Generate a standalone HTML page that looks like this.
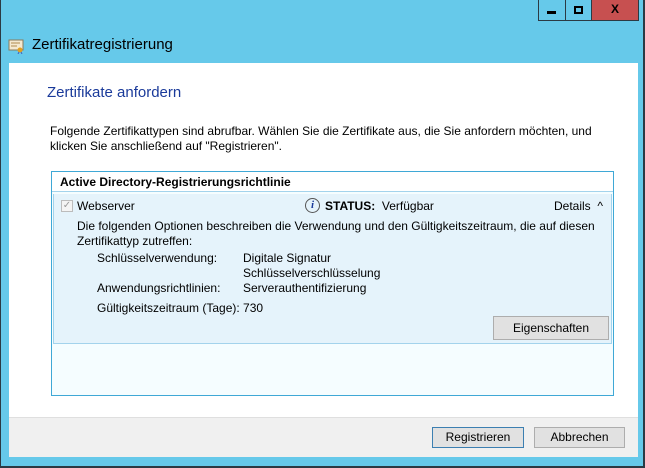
<!DOCTYPE html>
<html><head><meta charset="utf-8"><style>
*{margin:0;padding:0;box-sizing:border-box}
body{width:645px;height:468px;background:#66c9ea;position:relative;overflow:hidden;font-family:"Liberation Sans",sans-serif;font-size:12px;color:#000}
.a{position:absolute}
.btn{position:absolute;background:#e1e1e1;border:1px solid #adadad;text-align:center;font-size:12px;line-height:20px}
</style></head><body>
<div class="a" style="left:0;top:0;width:1px;height:468px;background:#2b3a44"></div>
<div class="a" style="left:0;top:466px;width:645px;height:2px;background:#2b3a44"></div>
<div class="a" style="left:643px;top:0;width:2px;height:468px;background:#2b3a44"></div>
<div class="a" style="left:538px;top:0;width:28px;height:21px;border:1px solid #2b3a44;border-top:0"></div>
<div class="a" style="left:547px;top:11px;width:9px;height:3px;background:#000"></div>
<div class="a" style="left:566px;top:0;width:26px;height:21px;border:1px solid #2b3a44;border-top:0;border-left:0"></div>
<div class="a" style="left:574px;top:6px;width:9px;height:8px;border:2px solid #000"></div>
<div class="a" style="left:592px;top:0;width:47px;height:21px;background:#c75050;border:1px solid #2b3a44;border-top:0;border-left:0;text-align:center;font-weight:bold;font-size:12px;line-height:19px">X</div>
<svg class="a" style="left:8px;top:38px" width="16" height="16" viewBox="0 0 16 16"><rect x="1" y="2" width="14" height="10" fill="#f4e9d0" stroke="#8a7a5a"/><line x1="3" y1="5" x2="12" y2="5" stroke="#b08a50"/><line x1="3" y1="8" x2="9" y2="8" stroke="#b08a50"/><circle cx="12" cy="12" r="2.5" fill="#e0a020"/><path d="M11 14l-1 2M13 14l1 2" stroke="#4060c0"/></svg>
<div class="a" style="left:32px;top:36px;font-size:15px">Zertifikatregistrierung</div>
<div class="a" style="left:9px;top:63px;width:629px;height:354px;background:#fff"></div>
<div class="a" style="left:9px;top:417px;width:629px;height:40px;background:#f0f0f0;border-top:1px solid #dfdfdf"></div>
<div class="a" style="left:47px;top:84px;font-size:15px;color:#1a3a9a">Zertifikate anfordern</div>
<div class="a" style="left:50px;top:124px;width:580px;line-height:15px">Folgende Zertifikattypen sind abrufbar. Wählen Sie die Zertifikate aus, die Sie anfordern möchten, und<br>klicken Sie anschließend auf "Registrieren".</div>
<div class="a" style="left:51px;top:171px;width:563px;height:225px;border:1px solid #3fa8d6;background:#f5fdff"></div>
<div class="a" style="left:52px;top:172px;width:561px;height:20px;background:#fff;border-bottom:1px solid #a3d3ec"></div>
<div class="a" style="left:60px;top:175px;font-weight:bold">Active Directory-Registrierungsrichtlinie</div>
<div class="a" style="left:53px;top:194px;width:559px;height:150px;background:#e5f3fb;border:1px solid #a3d3ec;border-top:0"></div>
<div class="a" style="left:61px;top:200px;width:12px;height:12px;border:1px solid #bcbcbc;background:#f4f4f4;color:#9a9a9a;font-size:10px;line-height:10px;text-align:center">✓</div>
<div class="a" style="left:77px;top:199px">Webserver</div>
<div class="a" style="left:305px;top:198px;width:15px;height:15px;border:1px solid #555;border-radius:50%;font:bold italic 11px 'Liberation Serif',serif;text-align:center;line-height:13px;color:#1a3a9a">i</div>
<div class="a" style="left:325px;top:199px"><b>STATUS:</b>&nbsp; Verfügbar</div>
<div class="a" style="left:554px;top:199px">Details &nbsp;^</div>
<div class="a" style="left:77px;top:219px;width:520px;line-height:15px">Die folgenden Optionen beschreiben die Verwendung und den Gültigkeitszeitraum, die auf diesen Zertifikattyp zutreffen:</div>
<div class="a" style="left:97px;top:251px;line-height:15px">Schlüsselverwendung:<br><br>Anwendungsrichtlinien:</div>
<div class="a" style="left:243px;top:251px;line-height:15px">Digitale Signatur<br>Schlüsselverschlüsselung<br>Serverauthentifizierung</div>
<div class="a" style="left:97px;top:301px">Gültigkeitszeitraum (Tage): 730</div>
<div class="btn" style="left:493px;top:316px;width:116px;height:24px;line-height:22px">Eigenschaften</div>
<div class="btn" style="left:432px;top:427px;width:92px;height:21px;border-color:#3c7fb1;line-height:19px">Registrieren</div>
<div class="btn" style="left:534px;top:427px;width:91px;height:21px;line-height:19px">Abbrechen</div>
</body></html>
